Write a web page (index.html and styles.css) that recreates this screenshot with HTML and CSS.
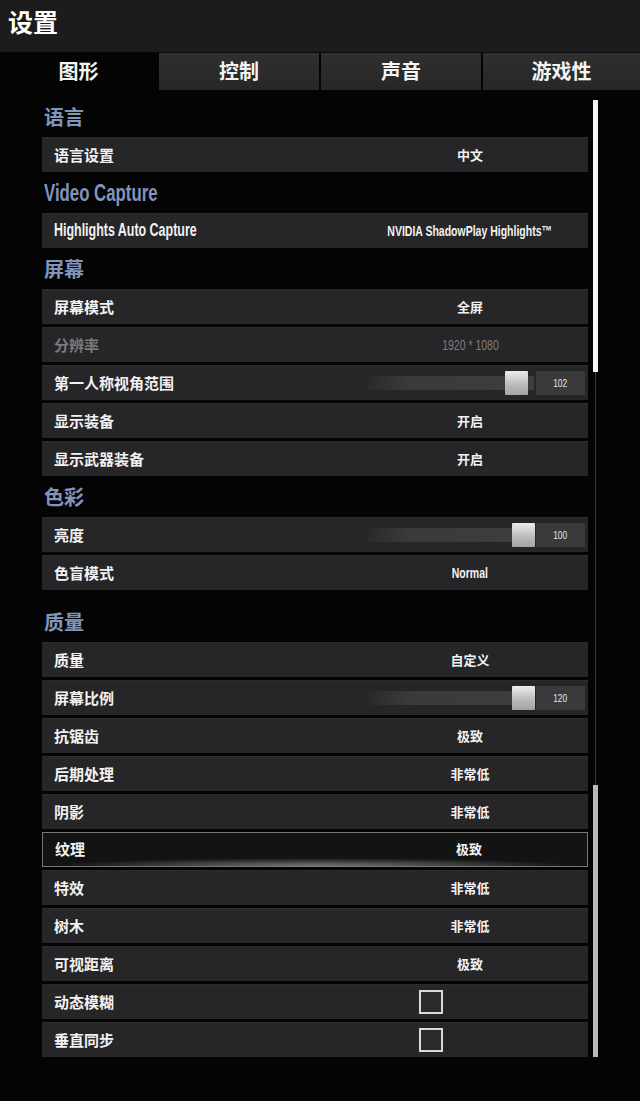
FILE: index.html
```html
<!DOCTYPE html>
<html lang="zh-CN">
<head>
<meta charset="utf-8">
<title>设置</title>
<link rel="stylesheet" href="styles.css">
</head>
<body>
<header class="titlebar">设置</header>
<nav class="tabs">
  <div class="tab active">图形</div>
  <div class="tab">控制</div>
  <div class="tab">声音</div>
  <div class="tab">游戏性</div>
</nav>
<div class="main">
  <div class="content">
    <h2 class="group-title">语言</h2>
    <div class="row"><span class="label">语言设置</span><span class="value">中文</span></div>

    <h2 class="group-title"><span class="cond cond-left title-latin">Video Capture</span></h2>
    <div class="row"><span class="label"><span class="cond cond-left label-latin">Highlights Auto Capture</span></span><span class="value"><span class="cond value-latin">NVIDIA ShadowPlay Highlights™</span></span></div>

    <h2 class="group-title">屏幕</h2>
    <div class="row"><span class="label">屏幕模式</span><span class="value">全屏</span></div>
    <div class="row disabled"><span class="label">分辨率</span><span class="value"><span class="cond value-latin">1920 * 1080</span></span></div>
    <div class="row"><span class="label">第一人称视角范围</span>
      <span class="slider"><span class="track"><span class="thumb" style="left:137px"></span></span><span class="num"><span class="cond">102</span></span></span></div>
    <div class="row"><span class="label">显示装备</span><span class="value">开启</span></div>
    <div class="row"><span class="label">显示武器装备</span><span class="value">开启</span></div>

    <h2 class="group-title">色彩</h2>
    <div class="row"><span class="label">亮度</span>
      <span class="slider"><span class="track"><span class="thumb" style="left:144px"></span></span><span class="num"><span class="cond">100</span></span></span></div>
    <div class="row"><span class="label">色盲模式</span><span class="value"><span class="cond value-latin">Normal</span></span></div>

    <h2 class="group-title spaced">质量</h2>
    <div class="row"><span class="label">质量</span><span class="value">自定义</span></div>
    <div class="row"><span class="label">屏幕比例</span>
      <span class="slider"><span class="track"><span class="thumb" style="left:144px"></span></span><span class="num"><span class="cond">120</span></span></span></div>
    <div class="row"><span class="label">抗锯齿</span><span class="value">极致</span></div>
    <div class="row"><span class="label">后期处理</span><span class="value">非常低</span></div>
    <div class="row"><span class="label">阴影</span><span class="value">非常低</span></div>
    <div class="row selected"><span class="label">纹理</span><span class="value">极致</span></div>
    <div class="row"><span class="label">特效</span><span class="value">非常低</span></div>
    <div class="row"><span class="label">树木</span><span class="value">非常低</span></div>
    <div class="row"><span class="label">可视距离</span><span class="value">极致</span></div>
    <div class="row"><span class="label">动态模糊</span><span class="check"><span class="box"></span></span></div>
    <div class="row"><span class="label">垂直同步</span><span class="check"><span class="box"></span></span></div>
  </div>
  <div class="scrollbar">
    <div class="sb-thumb sb-top"></div>
    <div class="sb-rail"></div>
    <div class="sb-thumb sb-bottom"></div>
  </div>
</div>
</body>
</html>
```
FILE: styles.css
```css
* { box-sizing: border-box; }

html, body {
  margin: 0;
  padding: 0;
  background: #040404;
}

body {
  width: 640px;
  height: 1101px;
  overflow: hidden;
  color: #f2f2f2;
  font-family: "Noto Sans CJK SC", "Noto Sans", sans-serif;
}

.titlebar {
  height: 53px;
  background: #1c1c1c;
  border-bottom: 1px solid #0a0a0a;
  padding: 3px 0 0 8px;
  font-size: 25px;
  font-weight: 700;
  line-height: 36px;
  color: #ffffff;
}

.tabs {
  display: grid;
  grid-template-columns: 157px 160px 160px 1fr;
  column-gap: 2px;
  height: 37px;
}

.tab {
  display: flex;
  align-items: center;
  justify-content: center;
  background: linear-gradient(#2f2f2f, #272727);
  font-size: 20px;
  font-weight: 700;
  color: #f4f4f4;
  padding-bottom: 2px;
}

.tab.active {
  background: #040404;
}

.main {
  display: flex;
  align-items: flex-start;
  padding: 9px 0 0 42px;
}

.content {
  width: 546px;
}

.group-title {
  margin: 0;
  height: 38px;
  display: flex;
  align-items: center;
  padding: 0 0 3px 2px;
  font-size: 20px;
  font-weight: 700;
  color: #8194bb;
}

.group-title.spaced {
  margin-top: 14px;
}

/* Condensed Latin text (the game's narrow typeface) */
.cond {
  display: inline-block;
  font-family: "Liberation Sans", "Noto Sans CJK SC", sans-serif;
  transform: scaleX(0.76);
  transform-origin: center;
  white-space: nowrap;
}

.cond-left {
  transform-origin: left center;
}

.title-latin {
  font-size: 24px;
  font-weight: 700;
  transform: scaleX(0.70);
  transform-origin: left center;
}

.label-latin {
  font-size: 19px;
  font-weight: 700;
  transform: scaleX(0.655);
  transform-origin: left center;
}

.value-latin {
  font-size: 15px;
  font-weight: 700;
  transform: scaleX(0.70);
}

.row {
  height: 35px;
  margin-bottom: 3px;
  display: grid;
  grid-template-columns: 1fr 236px;
  align-items: center;
  padding-left: 12px;
  background: #262527;
  border-top: 1px solid #2c2b2d;
}

.label {
  font-size: 15px;
  font-weight: 700;
  color: #f2f2f2;
  white-space: nowrap;
  margin-top: -2px;
}

.value {
  text-align: center;
  font-size: 13px;
  font-weight: 700;
  color: #f2f2f2;
  white-space: nowrap;
  margin-top: -2px;
}

.row.disabled .label {
  color: #7a7a7a;
}

.row.disabled .value {
  color: #7e7e7e;
}

.row.disabled .value-latin {
  font-weight: 400;
}

.row.selected {
  background:
    radial-gradient(ellipse 48% 8px at 50% 100%, rgba(215, 215, 215, 0.5), rgba(215, 215, 215, 0) 100%),
    #131313;
  border: 1px solid #777777;
}

.slider {
  display: flex;
  align-items: center;
  padding-left: 16px;
}

.track {
  position: relative;
  width: 166px;
  height: 24px;
  display: flex;
  align-items: center;
}

.track::before {
  content: "";
  display: block;
  width: 100%;
  height: 14px;
  background: linear-gradient(to right, #2a2a2a, #3a3a3a 25%, #3e3e3e);
}

.thumb {
  position: absolute;
  top: 0;
  width: 23px;
  height: 24px;
  background: linear-gradient(#ececec, #b9b9b9 60%, #a4a4a4);
  border-radius: 1px;
}

.num {
  width: 49px;
  height: 24px;
  margin-left: 2px;
  display: flex;
  align-items: center;
  justify-content: center;
  background: #3a393b;
  font-size: 11px;
  color: #e6e6e6;
}

.check {
  display: flex;
  padding-left: 67px;
}

.box {
  width: 24px;
  height: 24px;
  border: 2px solid #d9d9d9;
  background: #2a2a2a;
}

.scrollbar {
  margin: 1px 0 0 5px;
  width: 5px;
  height: 957px;
  display: flex;
  flex-direction: column;
  align-items: center;
}

.sb-thumb {
  width: 5px;
  flex: none;
}

.sb-top {
  height: 272px;
  background: #f4f4f4;
}

.sb-rail {
  width: 1px;
  flex: 1;
  background: #3a3a3a;
}

.sb-bottom {
  height: 272px;
  background: #b8b8b8;
}
```
